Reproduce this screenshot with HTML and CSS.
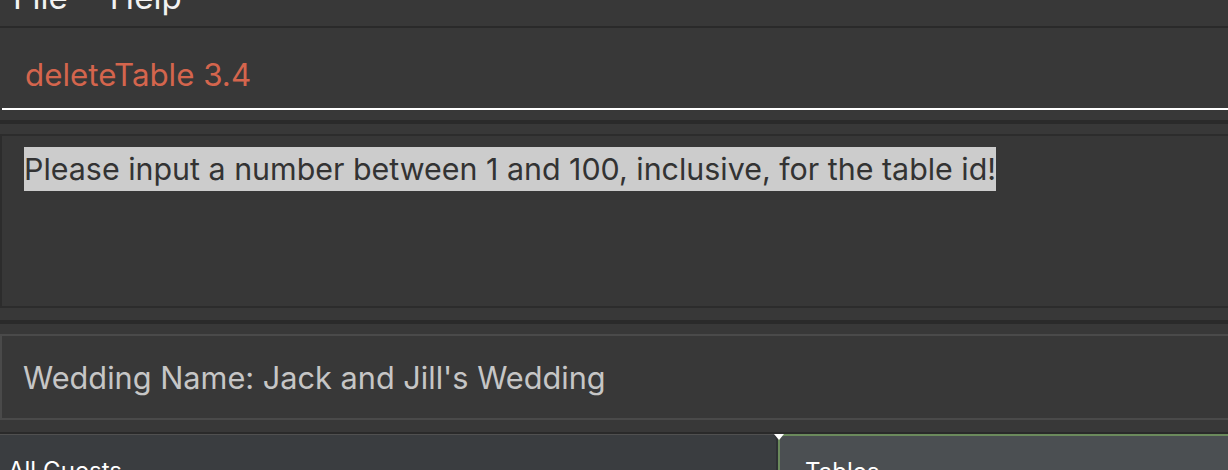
FILE: index.html
```html
<!DOCTYPE html>
<html>
<head>
<meta charset="utf-8">
<link rel="stylesheet" href="styles.css">
</head>
<body>
<div class="app">
  <div class="menubar">
    <span class="menu-item">File</span>
    <span class="menu-item">Help</span>
  </div>
  <div class="band"></div>
  <div class="command">
    <div class="command-field">
      <span class="command-text">deleteTable 3.4</span>
    </div>
  </div>
  <div class="band band-4"></div>
  <div class="result">
    <div class="result-box">
      <span class="result-text">Please input a number between 1 and 100, inclusive, for the table id!</span>
    </div>
  </div>
  <div class="band band-4"></div>
  <div class="wedding">
    <div class="wedding-box">Wedding Name: Jack and Jill's Wedding</div>
  </div>
  <div class="band"></div>
  <div class="tabs">
    <div class="tab tab-guests">All Guests</div>
    <div class="tab tab-tables">Tables</div>
    <span class="tab-marker"></span>
  </div>
</div>
</body>
</html>
```

FILE: styles.css
```css
html, body {
  margin: 0;
  padding: 0;
}
body {
  background: #383838;
  font-family: Inter, "Noto Sans", sans-serif;
  overflow: hidden;
}
.app {
  width: 1228px;
  height: 470px;
  display: flex;
  flex-direction: column;
  overflow: hidden;
}
.menubar {
  height: 26px;
  flex: 0 0 26px;
  overflow: hidden;
  display: flex;
  gap: 42px;
  padding-left: 13px;
  background: #383838;
}
.menu-item {
  color: #f2f2f2;
  font-size: 33px;
  line-height: 33px;
  margin-top: -19px;
}
.band {
  flex: 0 0 2px;
  background: #2a2a2a;
}
.band-4 {
  flex-basis: 4px;
}
.command {
  flex: 0 0 92px;
  box-sizing: border-box;
}
.command-field {
  height: 82px;
  margin-left: 2px;
  border-bottom: 2px solid #ffffff;
  box-sizing: border-box;
  display: flex;
  align-items: center;
  padding-left: 23px;
  padding-top: 14px;
}
.command-text {
  color: #d4654d;
  font-size: 31.3px;
}
.result {
  flex: 0 0 196px;
  padding: 10px 0 12px;
  box-sizing: border-box;
}
.result-box {
  height: 100%;
  box-sizing: border-box;
  border: 2px solid #2c2c2c;
  border-right: none;
  background: #373737;
  padding: 11px 0 0 22px;
}
.result-text {
  background: #cccccc;
  color: #333333;
  font-size: 30.4px;
  line-height: 44px;
  display: inline-block;
}
.wedding {
  flex: 0 0 108px;
  padding: 10px 0 12px;
  box-sizing: border-box;
}
.wedding-box {
  height: 100%;
  box-sizing: border-box;
  border: 2px solid #4a4a4a;
  border-right: none;
  background: #383838;
  color: #c6c6c6;
  font-size: 30.7px;
  display: flex;
  align-items: center;
  padding-left: 21px;
}
.tabs {
  flex: 1 1 auto;
  display: flex;
  position: relative;
  background: #3a3d40;
  border-top: 1px solid #505050;
}
.tab {
  font-size: 24px;
  color: #ffffff;
  padding-top: 21px;
  box-sizing: border-box;
}
.tab-guests {
  width: 778px;
  padding-left: 8px;
  border-right: 2px solid #2e3134;
  border-top-right-radius: 6px;
}
.tab-tables {
  flex: 1;
  background: #4b4f52;
  border: 2px solid #6b8a5c;
  border-right: none;
  border-bottom: none;
  border-top-left-radius: 6px;
  padding-left: 25px;
  margin-top: -1px;
}
.tab-marker {
  position: absolute;
  left: 774px;
  top: -1px;
  width: 0;
  height: 0;
  border-left: 5px solid transparent;
  border-right: 5px solid transparent;
  border-top: 6px solid #ffffff;
}
```
